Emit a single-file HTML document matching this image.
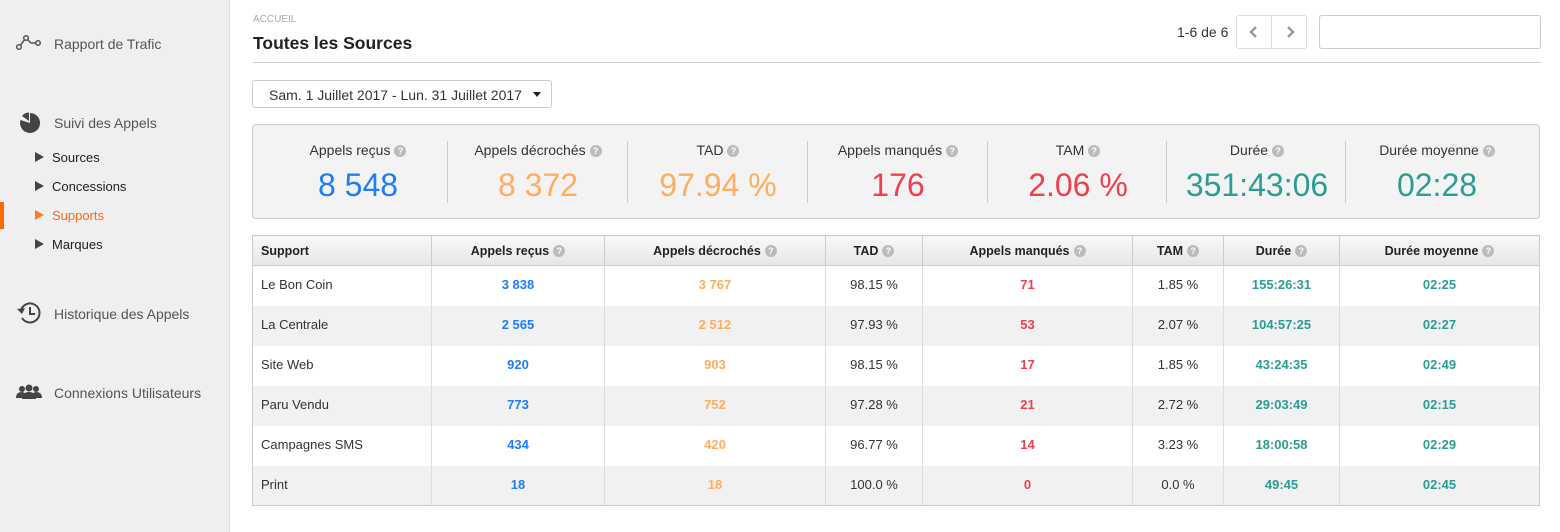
<!DOCTYPE html>
<html><head><meta charset="utf-8"><style>
*{box-sizing:border-box;margin:0;padding:0}
body{width:1560px;height:532px;background:#fff;font-family:"Liberation Sans",Arial,sans-serif;position:relative;overflow:hidden;color:#333}
.side{position:absolute;left:0;top:0;width:230px;height:532px;background:#efefef;border-right:1px solid #ddd}
.nav{position:absolute;left:54px;font-size:14px;color:#555}
.ico{position:absolute;left:16px}
.sub{position:absolute;left:52px;font-size:13px;color:#222}
.tri{position:absolute;left:35px;width:0;height:0;border-left:9px solid #444;border-top:5px solid transparent;border-bottom:5px solid transparent}
.q{display:inline-block;width:12px;height:12px;border-radius:50%;background:#bbb;color:#fff;font-size:9px;font-weight:bold;line-height:12px;text-align:center;vertical-align:1px;margin-left:4px}
.stats{position:absolute;left:252px;top:124px;width:1288px;height:95px;background:#f3f3f3;border:1px solid #ccc;border-radius:4px}
.st{position:absolute;top:0;width:180px;height:93px;text-align:center}
.st .l{position:absolute;top:17px;width:100%;font-size:14px;color:#333}
.st .v{position:absolute;top:42px;width:100%;font-size:32px}
.dv{position:absolute;top:16px;width:1px;height:62px;background:#ccc}
table{position:absolute;left:252px;top:235px;border-collapse:collapse;width:1287px;table-layout:fixed;font-size:13px}
th{height:30px;background:linear-gradient(#f8f8f8,#e6e6e6);border:1px solid #ccc;font-size:12.5px;color:#222;text-align:center}
th:first-child{text-align:left;padding-left:8px}
td{height:40px;text-align:center;border-left:1px solid #ddd;border-right:1px solid #ddd;padding-bottom:2px}
td:first-child{text-align:left;padding-left:8px;border-left:1px solid #ccc}
td:last-child{border-right:1px solid #ccc}
tr.g td{background:#f1f1f1}
tr:last-child td{border-bottom:1px solid #ccc}
.b{color:#1e7ef7;font-weight:bold}.o{color:#ffad5f;font-weight:bold}.r{color:#f0404f;font-weight:bold}.t{color:#2a9d94;font-weight:bold}
</style></head><body>
<div class="side">
<svg class="ico" style="top:33px" width="26" height="18" viewBox="0 0 26 18"><polyline points="3,14 10,5 15,10 22,10" fill="none" stroke="#555" stroke-width="1.5"/><circle cx="3" cy="14" r="2.3" fill="#efefef" stroke="#555" stroke-width="1.5"/><circle cx="10" cy="5" r="2.3" fill="#efefef" stroke="#555" stroke-width="1.5"/><circle cx="22" cy="10" r="2.3" fill="#efefef" stroke="#555" stroke-width="1.5"/></svg>
<div class="nav" style="top:36px">Rapport de Trafic</div>
<svg class="ico" style="top:112px;left:19px" width="22" height="22" viewBox="0 0 22 22"><path d="M11 11 L11 1 A10 10 0 1 1 1.5 8 Z" fill="#444"/><path d="M10 9 L10 0.5 A9 9 0 0 0 3 4 Z" fill="#444"/></svg>
<div class="nav" style="top:115px">Suivi des Appels</div>
<div class="tri" style="top:152px"></div><div class="sub" style="top:150px">Sources</div>
<div class="tri" style="top:181px"></div><div class="sub" style="top:179px">Concessions</div>
<div style="position:absolute;left:0;top:202px;width:4px;height:27px;background:#ff6a00"></div>
<div class="tri" style="top:210px;border-left-color:#ff7a1a"></div><div class="sub" style="top:208px;color:#ff6a1a">Supports</div>
<div class="tri" style="top:239px"></div><div class="sub" style="top:237px">Marques</div>
<svg class="ico" style="top:301px" width="26" height="24" viewBox="0 0 26 24"><path d="M5 9 A9.5 9.5 0 1 1 6 17" fill="none" stroke="#444" stroke-width="2"/><path d="M1 8 L6 13 L9 7 Z" fill="#444"/><path d="M14 6 V13 H19" fill="none" stroke="#444" stroke-width="2"/></svg>
<div class="nav" style="top:306px">Historique des Appels</div>
<svg class="ico" style="top:382px" width="26" height="20" viewBox="0 0 26 20"><circle cx="13" cy="6" r="3.5" fill="#444"/><path d="M6 17 Q6 10 13 10 Q20 10 20 17 Z" fill="#444"/><circle cx="6" cy="7" r="3" fill="#444"/><path d="M0 16 Q0 10 6 10 Q9 10 9 13 V16Z" fill="#444"/><circle cx="20" cy="7" r="3" fill="#444"/><path d="M26 16 Q26 10 20 10 Q17 10 17 13 V16Z" fill="#444"/></svg>
<div class="nav" style="top:385px">Connexions Utilisateurs</div>
</div>

<div style="position:absolute;left:253px;top:14px;font-size:10px;color:#aaa">ACCUEIL</div>
<div style="position:absolute;left:253px;top:33px;font-size:17.5px;font-weight:bold;color:#222">Toutes les Sources</div>
<div style="position:absolute;left:253px;top:62px;width:1288px;height:1px;background:#ccc"></div>
<div style="position:absolute;left:1177px;top:24px;font-size:14px;color:#333">1-6 de 6</div>
<div style="position:absolute;left:1236px;top:15px;width:71px;height:34px;border:1px solid #ddd;border-radius:3px"><div style="position:absolute;left:34px;top:0;width:1px;height:32px;background:#ddd"></div>
<svg style="position:absolute;left:12px;top:10px" width="10" height="12"><path d="M7 1 L2 6 L7 11" fill="none" stroke="#999" stroke-width="2.5"/></svg>
<svg style="position:absolute;left:48px;top:10px" width="10" height="12"><path d="M3 1 L8 6 L3 11" fill="none" stroke="#999" stroke-width="2.5"/></svg></div>
<div style="position:absolute;left:1319px;top:15px;width:222px;height:34px;border:1px solid #ccc;border-radius:3px"></div>
<div style="position:absolute;left:252px;top:80px;width:300px;height:28px;border:1px solid #ccc;border-radius:3px;font-size:14px;color:#333;padding:6px 0 0 16px">Sam. 1 Juillet 2017 - Lun. 31 Juillet 2017<span style="position:absolute;left:280px;top:11px;border-top:5px solid #222;border-left:4px solid transparent;border-right:4px solid transparent"></span></div>

<div class="stats">
<div class="st" style="left:15px"><div class="l">Appels reçus<span class="q">?</span></div><div class="v" style="color:#1e7ef7">8 548</div></div>
<div class="dv" style="left:194px"></div>
<div class="st" style="left:195px"><div class="l">Appels décrochés<span class="q">?</span></div><div class="v" style="color:#ffad5f">8 372</div></div>
<div class="dv" style="left:374px"></div>
<div class="st" style="left:375px"><div class="l">TAD<span class="q">?</span></div><div class="v" style="color:#ffad5f">97.94 %</div></div>
<div class="dv" style="left:554px"></div>
<div class="st" style="left:555px"><div class="l">Appels manqués<span class="q">?</span></div><div class="v" style="color:#f0404f">176</div></div>
<div class="dv" style="left:734px"></div>
<div class="st" style="left:735px"><div class="l">TAM<span class="q">?</span></div><div class="v" style="color:#f0404f">2.06 %</div></div>
<div class="dv" style="left:913px"></div>
<div class="st" style="left:914px"><div class="l">Durée<span class="q">?</span></div><div class="v" style="color:#2a9d94">351:43:06</div></div>
<div class="dv" style="left:1092px"></div>
<div class="st" style="left:1094px"><div class="l">Durée moyenne<span class="q">?</span></div><div class="v" style="color:#2a9d94">02:28</div></div>
</div>

<table>
<colgroup><col style="width:179px"><col style="width:173px"><col style="width:221px"><col style="width:97px"><col style="width:210px"><col style="width:91px"><col style="width:116px"><col style="width:200px"></colgroup>
<tr><th>Support</th><th>Appels reçus<span class="q">?</span></th><th>Appels décrochés<span class="q">?</span></th><th>TAD<span class="q">?</span></th><th>Appels manqués<span class="q">?</span></th><th>TAM<span class="q">?</span></th><th>Durée<span class="q">?</span></th><th>Durée moyenne<span class="q">?</span></th></tr>
<tr><td>Le Bon Coin</td><td class="b">3 838</td><td class="o">3 767</td><td>98.15 %</td><td class="r">71</td><td>1.85 %</td><td class="t">155:26:31</td><td class="t">02:25</td></tr>
<tr class="g"><td>La Centrale</td><td class="b">2 565</td><td class="o">2 512</td><td>97.93 %</td><td class="r">53</td><td>2.07 %</td><td class="t">104:57:25</td><td class="t">02:27</td></tr>
<tr><td>Site Web</td><td class="b">920</td><td class="o">903</td><td>98.15 %</td><td class="r">17</td><td>1.85 %</td><td class="t">43:24:35</td><td class="t">02:49</td></tr>
<tr class="g"><td>Paru Vendu</td><td class="b">773</td><td class="o">752</td><td>97.28 %</td><td class="r">21</td><td>2.72 %</td><td class="t">29:03:49</td><td class="t">02:15</td></tr>
<tr><td>Campagnes SMS</td><td class="b">434</td><td class="o">420</td><td>96.77 %</td><td class="r">14</td><td>3.23 %</td><td class="t">18:00:58</td><td class="t">02:29</td></tr>
<tr class="g"><td>Print</td><td class="b">18</td><td class="o">18</td><td>100.0 %</td><td class="r">0</td><td>0.0 %</td><td class="t">49:45</td><td class="t">02:45</td></tr>
</table>
</body></html>
